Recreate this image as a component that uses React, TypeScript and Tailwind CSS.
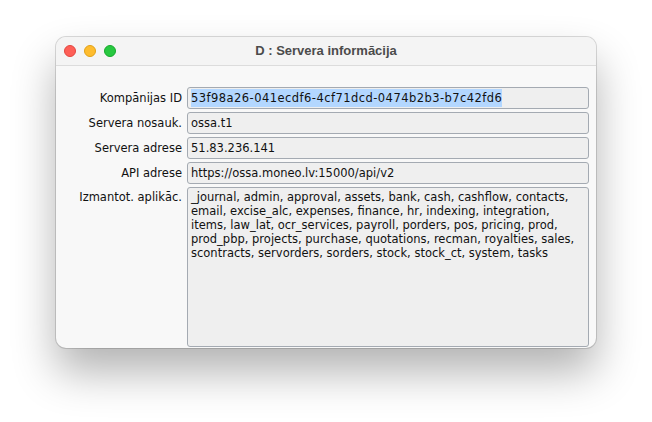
import React from "react";

const apps = [
  "_journal, admin, approval, assets, bank, cash, cashflow, contacts,",
  "email, excise_alc, expenses, finance, hr, indexing, integration,",
  "items, law_lat, ocr_services, payroll, porders, pos, pricing, prod,",
  "prod_pbp, projects, purchase, quotations, recman, royalties, sales,",
  "scontracts, servorders, sorders, stock, stock_ct, system, tasks",
];

const ui = { fontFamily: '"DejaVu Sans", "Noto Sans", sans-serif' };

function Label({ children, top }: { children: React.ReactNode; top?: boolean }) {
  return (
    <div
      className={
        top
          ? "text-right text-[11.5px] leading-[14px] pt-[3px] text-[#111]"
          : "text-right text-[11.5px] leading-[22px] text-[#111]"
      }
      style={ui}
    >
      {children}
    </div>
  );
}

function Field({ children }: { children: React.ReactNode }) {
  return (
    <div
      className="h-[22px] rounded-[3px] border border-[#a4aab2] bg-[#efefef] px-[3px] text-[11.5px] leading-[20px] text-[#111] whitespace-nowrap overflow-hidden"
      style={ui}
    >
      {children}
    </div>
  );
}

export default function App() {
  return (
    <div className="w-[652px] h-[422px] bg-white pt-[37px] pl-[56px]">
      <div className="w-[540px] h-[311px] rounded-[10px] overflow-hidden flex flex-col bg-[#f8f8f8] shadow-[0_0_0_1px_rgba(0,0,0,0.14),0_24px_44px_rgba(0,0,0,0.3)]">
        {/* title bar */}
        <div className="h-[29px] shrink-0 grid grid-cols-[1fr_auto_1fr] items-center border-b border-[#dcdcdc] bg-[#f4f4f4]">
          <div className="flex items-center gap-[8px] pl-[8px]">
            <span className="w-[12px] h-[12px] rounded-full bg-[#fe5f57] border border-[#e2463f]" />
            <span className="w-[12px] h-[12px] rounded-full bg-[#febc2e] border border-[#e1a116]" />
            <span className="w-[12px] h-[12px] rounded-full bg-[#28c840] border border-[#17a92c]" />
          </div>
          <div
            className="text-[13px] font-bold text-[#4b4b4b]"
            style={{ fontFamily: '"Liberation Sans", Arial, sans-serif' }}
          >
            D : Servera informācija
          </div>
          <div />
        </div>

        {/* form */}
        <div className="flex-1 pt-[21px] pb-[1px] grid grid-cols-[126px_402px] grid-rows-[22px_22px_22px_22px_1fr] gap-x-[5px] gap-y-[3px]">
          <Label>Kompānijas ID</Label>
          <Field>
            <span className="inline-block leading-[18px] bg-[#b3d7ff] tracking-[0.45px]">
              53f98a26-041ecdf6-4cf71dcd-0474b2b3-b7c42fd6
            </span>
          </Field>

          <Label>Servera nosauk.</Label>
          <Field>ossa.t1</Field>

          <Label>Servera adrese</Label>
          <Field>51.83.236.141</Field>

          <Label>API adrese</Label>
          <Field>https://ossa.moneo.lv:15000/api/v2</Field>

          <Label top>Izmantot. aplikāc.</Label>
          <div
            className="rounded-[3px] border border-[#a4aab2] bg-[#efefef] px-[3px] pt-[2px] text-[11.5px] leading-[14px] text-[#111]"
            style={ui}
          >
            {apps.map((l) => (
              <div key={l} className="whitespace-nowrap">
                {l}
              </div>
            ))}
          </div>
        </div>
      </div>
    </div>
  );
}
